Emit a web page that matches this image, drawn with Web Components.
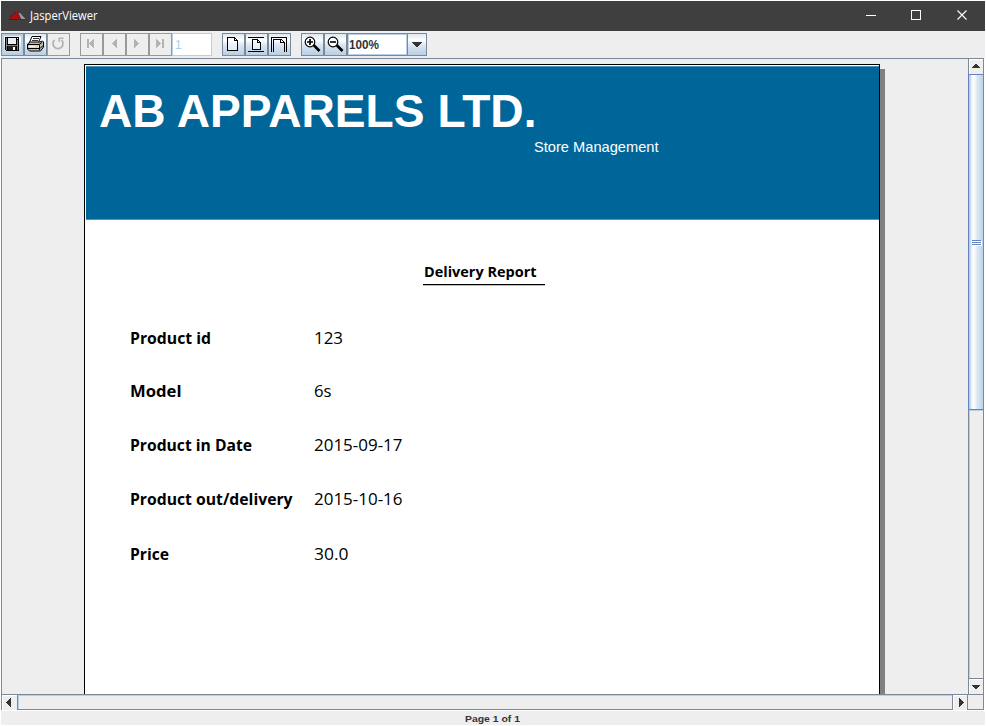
<!DOCTYPE html>
<html lang="en">
<head>
<meta charset="utf-8">
<title>JasperViewer</title>
<style>
html,body{margin:0;height:100%;background:#fff;overflow:hidden}
body{font-family:"Liberation Sans",sans-serif}
</style>
</head>
<body>
<viewer-window></viewer-window>
<script>
// Single line of text scaled horizontally to a given width.
class FitText extends HTMLElement{
  connectedCallback(){
    const r=this.attachShadow({mode:'open'});
    r.innerHTML='<style>:host{display:block;white-space:nowrap}span{display:inline-block;transform-origin:0 50%}</style><span><slot></slot></span>';
    const s=r.querySelector('span'),w=+this.getAttribute('w');
    this.style.width=w+'px';
    const n=s.getBoundingClientRect().width;
    if(n)s.style.transform='scaleX('+(w/n)+')';
  }
}

const lens='<path d="M12.500 12l6 6" stroke="#000" stroke-width="2.600"/><circle cx="9" cy="9" r="4.800" fill="#fff" stroke="#000" stroke-width="1.200"/>';
const ICONS={
  save:'<path d="M4 4h14v14H5l-1-1z" fill="#000"/><path d="M5 5h1v12H5zM16 7h1v10h-1z" fill="#808080"/><path d="M7 5h8v6H7z" fill="#eee"/><path d="M7 13h8v4H7z" fill="#222"/><path d="M12 14h2v3h-2zM16 5h1v1h-1z" fill="#fff"/><path d="M6 12h10v1H6z" fill="#808080"/>',
  print:'<g shape-rendering="auto"><path d="M8 3.500h9l-3 7H5z" fill="#fff" stroke="#000"/><path d="M9 5.500h6M8 7.500h6" stroke="#000" stroke-width=".8"/><path d="M3.500 11l3-2h9l3-1 1 1v5l-3 4h-11l-2-2z" fill="#bbb" stroke="#000"/><path d="M4 11.500h11l3-2M4 15.500h12l3-3M15.500 12v5" fill="none" stroke="#000"/><path d="M5 12.500h10v2H5z" fill="#f4f4f4"/><path d="M11 13h3v1h-3z" fill="#e9d84b"/></g>',
  reload:'<g shape-rendering="auto"><path d="M7.500 7A5 5 0 1 0 14.500 7" fill="none" stroke="#b3b3b3" stroke-width="1.800"/><path d="M11.500 9V4.500h5V6H13v3z" fill="#b3b3b3"/></g>',
  first:'<path d="M7 6h2v9H7zM14 6v9h-1v-1h-1v-1h-1v-1h-1v-1h-1v-1h1V9h1V8h1V7h1V6z" fill="#b3b3b3"/>',
  prev:'<path d="M14 6v9h-1v-1h-1v-1h-1v-1h-1v-1H9v-1h1V9h1V8h1V7h1V6z" fill="#b3b3b3"/>',
  next:'<path d="M8 6v9h1v-1h1v-1h1v-1h1v-1h1v-1h-1V9h-1V8h-1V7H9V6z" fill="#b3b3b3"/>',
  last:'<path d="M7 6v9h1v-1h1v-1h1v-1h1v-1h1v-1h-1V9h-1V8H9V7H8V6zM13 6h2v9h-2z" fill="#b3b3b3"/>',
  actual:'<path d="M5.500 4.500h7l3 3v10h-10z" fill="#fff" fill-opacity=".45" stroke="#000"/><path d="M12.500 4.500v3h3" fill="none" stroke="#000"/>',
  fitpage:'<path d="M3 4.500h16M3 18.500h16" stroke="#000"/><path d="M7.500 6.500h5l3 3v7h-8z" fill="#fff" fill-opacity=".45" stroke="#000"/><path d="M12.500 6.500v3h3" fill="none" stroke="#000"/>',
  fitwidth:'<path d="M3.500 19V4.500h15V19" fill="none" stroke="#000"/><path d="M5.500 19V6.500h8l3 3V19M12.500 6.500v3h3" fill="none" stroke="#000"/>',
  zoomin:`<g shape-rendering="auto">${lens}<path d="M6 9h6M9 6v6" stroke="#000" stroke-width="1.700"/></g>`,
  zoomout:`<g shape-rendering="auto">${lens}<path d="M6 9h6" stroke="#000" stroke-width="1.600"/></g>`
};
class ToolButton extends HTMLElement{
  connectedCallback(){
    this.attachShadow({mode:'open'}).innerHTML=`<style>
    :host{display:block;box-sizing:border-box;width:23px;height:23px;border:1px solid #7a8a99;background:linear-gradient(#dde8f3,#fff 30%,#dde8f3 50%,#b8cfe5);overflow:hidden}
    :host([off]){background:#eee;border-color:#999}
    :host([focus]){box-shadow:inset 0 0 0 2px #b8cfe5}
    svg{display:block;margin:-1px}</style><svg width="23" height="23" shape-rendering="crispEdges">${ICONS[this.getAttribute('icon')]}</svg>`;
  }
}

class TitleBar extends HTMLElement{
  connectedCallback(){
    this.attachShadow({mode:'open'}).innerHTML=`<style>
    :host{display:flex;flex:none;height:30px;background:#3f3f3f;color:#fff;align-items:center}
    .logo{margin-left:8px;width:16px;height:16px}
    fit-text{margin-left:5px;font:12px/28px "Open Sans",sans-serif;flex:none}
    i{flex:1}
    .c{width:46px;height:30px;flex:none}</style>
    <svg class="logo" viewBox="0 0 16 16"><path d="M8 5h3l5 5.500v1H9z" fill="#999"/><path d="M0 11.500v-1L6.500 4H8.500L12 11.500z" fill="#ad0c12"/><path d="M0 11.500h16M8.500 4L12 11.500M6.500 4L0 10.500" stroke="#222" stroke-width=".7"/></svg>
    <fit-text w="67.500">JasperViewer</fit-text><i></i>
    <svg class="c" shape-rendering="crispEdges"><path d="M19 14.500h10" stroke="#fff"/></svg>
    <svg class="c" shape-rendering="crispEdges"><path d="M18.500 9.500h9v9h-9z" fill="none" stroke="#fff"/></svg>
    <svg class="c"><path d="M18.500 9.500l9 9M27.500 9.500l-9 9" stroke="#fff" stroke-width="1.100"/></svg>`;
  }
}

class ToolBar extends HTMLElement{
  connectedCallback(){
    const g=(l,a='')=>l.map(i=>`<tool-button icon="${i}" ${a}></tool-button>`).join('');
    this.attachShadow({mode:'open'}).innerHTML=`<style>
    :host{display:flex;flex:none;height:27px;padding-top:2px;box-sizing:border-box}
    div{display:flex}.gap{margin-left:10px}
    .num,.combo{box-sizing:border-box;height:23px;background:#fff}
    .num{width:40px;border:1px solid #b8cfe5;color:#a9d3ea;font:12px/22px "Liberation Sans",sans-serif;padding-left:2px}
    .combo{width:80px;border:1px solid #7a8a99;font:bold 12px/21px "Liberation Sans",sans-serif;color:#333}
    .val{width:59px;box-sizing:border-box;border:1px solid #b8cfe5;line-height:20px}
    .drop{width:19px;border-left:1px solid #7a8a99;box-sizing:border-box;background:linear-gradient(#dde8f3,#fff 30%,#dde8f3 50%,#b8cfe5)}
    </style>
    <div><tool-button icon="save" focus></tool-button>${g(['print'])}${g(['reload'],'off')}</div>
    <div class="gap">${g(['first','prev','next','last'],'off')}<div class="num">1</div></div>
    <div class="gap">${g(['actual','fitpage','fitwidth'])}</div>
    <div class="gap">${g(['zoomin','zoomout'])}<div class="combo"><div class="val"><fit-text w="30">100%</fit-text></div><div class="drop"><svg width="18" height="21" shape-rendering="crispEdges"><path d="M4 8h10v1h-1v1h-1v1h-1v1h-1v1H8v-1H7v-1H6v-1H5V9H4z" fill="#333"/></svg></div></div></div>`;
  }
}

class ReportField extends HTMLElement{
  connectedCallback(){
    const a=n=>this.getAttribute(n);
    this.attachShadow({mode:'open'}).innerHTML=`<style>
    :host{display:grid;grid-template-columns:184px auto;font:16px/20px "Open Sans",sans-serif;color:#000}
    .l{font-weight:700}</style>
    <fit-text class="l" w="${a('lw')}">${a('label')}</fit-text><fit-text w="${a('vw')}">${a('value')}</fit-text>`;
  }
}

class ReportPage extends HTMLElement{
  connectedCallback(){
    this.attachShadow({mode:'open'}).innerHTML=`<style>
    :host{display:block;box-sizing:border-box;width:796px;height:630px;border:1px solid #000;border-bottom:0;background:#fff;padding:1px 0 0 1px}
    header{box-sizing:border-box;height:154px;background:#006699;border-top:1px solid #4d94b8;border-bottom:1px solid #4d94b8;color:#fff}
    h1{margin:0;padding:18px 0 0 13px;font:bold 46px/52px "Liberation Sans",sans-serif}
    .sub{margin:1px 0 0 448px;font:15px/18px "Liberation Sans",sans-serif}
    .title{margin:42px 0 0 337.500px;font:bold 14.500px/20px "Open Sans",sans-serif;color:#000}
    hr{width:122px;height:1px;border:0;background:#000;margin:2px 0 0 337px;box-shadow:0 1px #bbb}
    main{display:grid;grid-template-rows:53px 54px 54px 55px 20px;padding:43px 0 0 43.500px}
    </style>
    <header><h1><fit-text w="437.500">AB APPARELS LTD.</fit-text></h1><fit-text class="sub" w="124.500">Store Management</fit-text></header>
    <fit-text class="title" w="112.500">Delivery Report</fit-text><hr>
    <main>
    <report-field label="Product id" lw="81" value="123" vw="29"></report-field>
    <report-field label="Model" lw="51.500" value="6s" vw="17.500"></report-field>
    <report-field label="Product in Date" lw="122" value="2015-09-17" vw="88.500"></report-field>
    <report-field label="Product out/delivery" lw="162.500" value="2015-10-16" vw="88.500"></report-field>
    <report-field label="Price" lw="39" value="30.0" vw="34.500"></report-field>
    </main>`;
  }
}

class ScrollButton extends HTMLElement{
  connectedCallback(){
    const P={up:'M6 5h2v1h1v1h1v1h1v1H3V8h1V7h1V6h1z',down:'M3 6h8v1h-1v1H9v1H8v1H6V9H5V8H4V7H3z',left:'M9 3v9H8v-1H7v-1H6V9H5V8H4V7h1V6h1V5h1V4h1V3z',right:'M6 3v9h1v-1h1v-1h1V9h1V8h1V7h-1V6H9V5H8V4H7V3z'};
    this.attachShadow({mode:'open'}).innerHTML=`<style>:host{display:block;width:15px;height:15px;background:#eee;box-shadow:inset 1px 1px #fff;flex:none;overflow:hidden}svg{display:block}</style><svg width="15" height="15" shape-rendering="crispEdges"><path d="${P[this.getAttribute('dir')]}" fill="#333"/></svg>`;
  }
}

class ScrollV extends HTMLElement{
  connectedCallback(){
    this.attachShadow({mode:'open'}).innerHTML=`<style>
    :host{display:flex;flex-direction:column;box-sizing:border-box;width:15px;border-left:1px solid #7a8a99}
    scroll-button{width:14px}
    .thumb{height:336px;box-sizing:border-box;border:solid #6382bf;border-width:1px 0 1px 1px;margin-left:-1px;background:linear-gradient(90deg,#b8cfe5 0 1px,#dde8f3 2px,#fff 4px,#fff 5px,#dde8f3 8px,#b8cfe5 15px);padding:165px 0 0 3px}
    .thumb svg{display:block}
    .track{flex:1;box-shadow:inset 1px 1px #b8cfe5}
    .end{border-top:1px solid #7a8a99}</style>
    <scroll-button dir="up"></scroll-button><div class="thumb"><svg width="10" height="6" shape-rendering="crispEdges"><path d="M1 1h9v5H1z" fill="#fff"/><path d="M0 0h9v1H0zM0 2h9v1H0zM0 4h9v1H0z" fill="#6382bf"/></svg></div><div class="track"></div><div class="end"><scroll-button dir="down"></scroll-button></div>`;
  }
}

class ScrollH extends HTMLElement{
  connectedCallback(){
    this.attachShadow({mode:'open'}).innerHTML=`<style>
    :host{display:flex;height:15px;border-top:1px solid #7a8a99;box-sizing:border-box}
    .track{flex:1;border:solid #7a8a99;border-width:0 1px;box-shadow:inset 1px 1px #b8cfe5}
    .corner{width:16px;box-sizing:border-box;border-left:1px solid #7a8a99;background:#eee}
    .r{width:14px}</style>
    <scroll-button dir="left"></scroll-button><div class="track"></div><scroll-button class="r" dir="right"></scroll-button><div class="corner"></div>`;
  }
}

class ViewerWindow extends HTMLElement{
  connectedCallback(){
    this.attachShadow({mode:'open'}).innerHTML=`<style>
    :host{display:flex;flex-direction:column;box-sizing:border-box;width:984px;height:724px;margin:1px;background:#eee}
    .pane{width:983px;height:652px;flex:none;box-sizing:border-box;border:1px solid #7a8a99;display:flex;flex-direction:column;box-shadow:1px 1px #fff}
    .mid{display:flex;height:635px}
    .view{width:966px;overflow:hidden;padding:5px 0 0 82px;box-sizing:border-box;display:flex}
    .shade{width:5px;margin-top:5px;background:#808080}
    report-page{flex:none}
    footer{display:flex;flex:none;height:14px;margin-top:1px;padding-left:463.500px;font:bold 9.500px/15px "Liberation Sans",sans-serif;color:#333}
    </style>
    <title-bar></title-bar><tool-bar></tool-bar>
    <div class="pane"><div class="mid"><div class="view"><report-page></report-page><div class="shade"></div></div><scroll-v></scroll-v></div><scroll-h></scroll-h></div>
    <footer><fit-text w="55">Page 1 of 1</fit-text></footer>`;
  }
}
// Text is measured as it connects, so the window that holds it is defined last.
[['fit-text',FitText],['tool-button',ToolButton],['title-bar',TitleBar],['tool-bar',ToolBar],['report-field',ReportField],['report-page',ReportPage],['scroll-button',ScrollButton],['scroll-v',ScrollV],['scroll-h',ScrollH],['viewer-window',ViewerWindow]].forEach(([n,c])=>customElements.define(n,c));
</script>
</body>
</html>
